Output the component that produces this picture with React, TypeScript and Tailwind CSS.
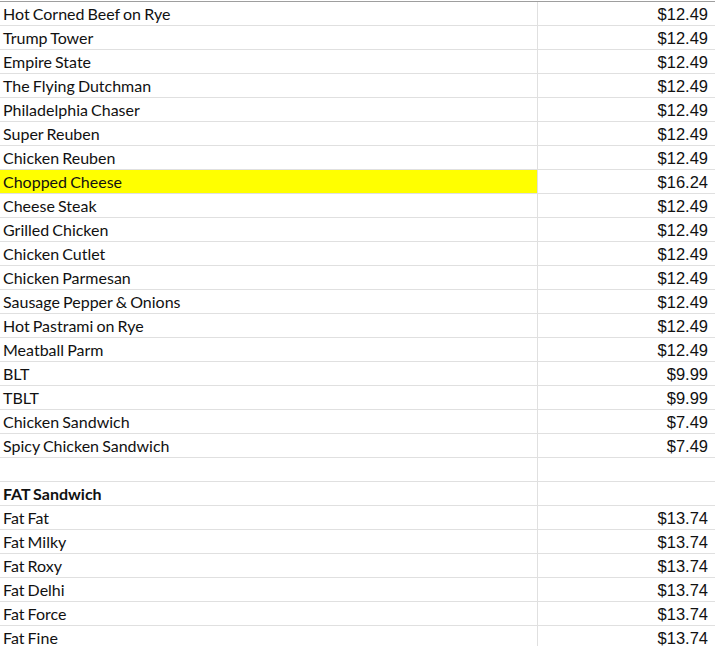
import React from "react";

type Row = { name: string; price?: string; bold?: boolean; highlight?: boolean };

const rows: Row[] = [
  { name: "Hot Corned Beef on Rye", price: "$12.49" },
  { name: "Trump Tower", price: "$12.49" },
  { name: "Empire State", price: "$12.49" },
  { name: "The Flying Dutchman", price: "$12.49" },
  { name: "Philadelphia Chaser", price: "$12.49" },
  { name: "Super Reuben", price: "$12.49" },
  { name: "Chicken Reuben", price: "$12.49" },
  { name: "Chopped Cheese", price: "$16.24", highlight: true },
  { name: "Cheese Steak", price: "$12.49" },
  { name: "Grilled Chicken", price: "$12.49" },
  { name: "Chicken Cutlet", price: "$12.49" },
  { name: "Chicken Parmesan", price: "$12.49" },
  { name: "Sausage Pepper & Onions", price: "$12.49" },
  { name: "Hot Pastrami on Rye", price: "$12.49" },
  { name: "Meatball Parm", price: "$12.49" },
  { name: "BLT", price: "$9.99" },
  { name: "TBLT", price: "$9.99" },
  { name: "Chicken Sandwich", price: "$7.49" },
  { name: "Spicy Chicken Sandwich", price: "$7.49" },
  { name: "" },
  { name: "FAT Sandwich", bold: true },
  { name: "Fat Fat", price: "$13.74" },
  { name: "Fat Milky", price: "$13.74" },
  { name: "Fat Roxy", price: "$13.74" },
  { name: "Fat Delhi", price: "$13.74" },
  { name: "Fat Force", price: "$13.74" },
  { name: "Fat Fine", price: "$13.74" },
];

export default function App() {
  return (
    <div className="w-[715px] h-[646px] overflow-hidden bg-white">
      <div className="h-px bg-white" />
      <div className="h-px bg-[#9e9e9e]" />
      <div className="grid grid-cols-[538px_1fr]">
        {rows.map((r, i) => (
          <React.Fragment key={i}>
            <div
              className={`h-6 border-b border-r border-[#e0e0e0] pl-[3px] pt-[1px] flex items-center text-[16px] text-[#111] leading-none [word-spacing:-1px] ${
                r.highlight ? "bg-[#ffff00]" : ""
              } ${r.bold ? "font-bold" : ""}`}
              style={{ fontFamily: "Lato, 'Noto Sans', sans-serif" }}
            >
              {r.name}
            </div>
            <div
              className="h-6 border-b border-[#e0e0e0] pr-[7px] pt-[1px] flex items-center justify-end text-[16.5px] text-[#111] leading-none"
              style={{ fontFamily: "'Liberation Sans', Arial, sans-serif" }}
            >
              {r.price}
            </div>
          </React.Fragment>
        ))}
      </div>
    </div>
  );
}
